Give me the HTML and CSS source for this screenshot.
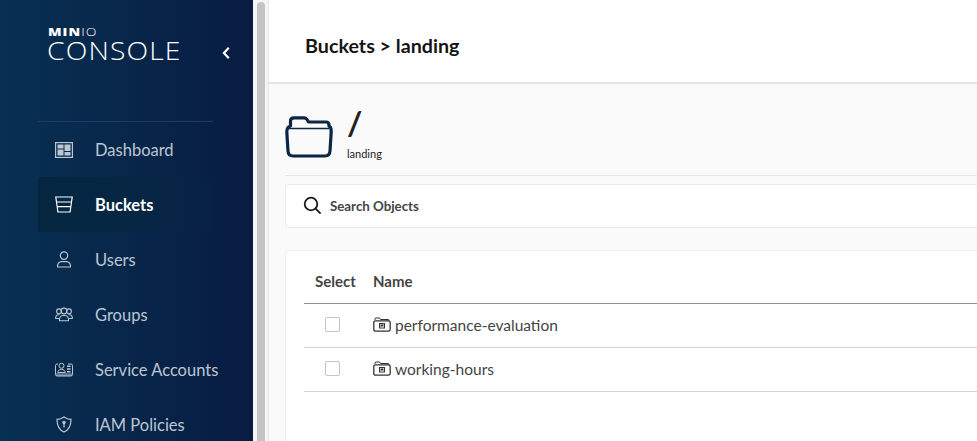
FILE: index.html
```html
<!DOCTYPE html>
<html lang="en">
<head>
<meta charset="utf-8">
<title>MinIO Console</title>
<link rel="stylesheet" href="styles.css">
</head>
<body>
<div class="app">
  <aside class="sidebar">
    <div class="brand">
      <div class="logo">
        <div class="logo-minio"><b>MIN</b><span>IO</span></div>
        <div class="logo-console">CONSOLE</div>
      </div>
      <svg class="collapse" width="10" height="14" viewBox="0 0 10 14"><path d="M7.800 1.800 2.900 7l4.900 5.200" fill="none" stroke="#fff" stroke-width="2.200"/></svg>
    </div>
    <nav class="nav">
      <a class="nav-item">
        <svg class="nav-icon" width="18" height="16" viewBox="0 0 18 16"><rect x=".6" y=".6" width="16.800" height="14.800" fill="none" stroke="currentColor" stroke-width="1.200"/><path d="M2.500 2.500h6v4h-6zM2.500 7.500h6v6h-6zM9.500 2.500h6v6.500h-6zM9.500 10h6v3.500h-6z" fill="currentColor"/></svg>
        <span>Dashboard</span>
      </a>
      <a class="nav-item active">
        <svg class="nav-icon" width="18" height="17" viewBox="0 0 18 17"><path d="M.8 1h16.400l-.7 5H1.500zM1.500 6l1.400 10h12.200l1.400-10M2.300 10.700h13.400" fill="none" stroke="currentColor" stroke-width="1.200"/></svg>
        <span>Buckets</span>
      </a>
      <a class="nav-item">
        <svg class="nav-icon" width="18" height="17" viewBox="0 0 18 17"><circle cx="9" cy="4.600" r="3.700" fill="none" stroke="currentColor" stroke-width="1.200"/><path d="M2.600 16c-.6-3 1.500-5.300 4-5.300h4.800c2.500 0 4.600 2.300 4 5.300z" fill="none" stroke="currentColor" stroke-width="1.200"/></svg>
        <span>Users</span>
      </a>
      <a class="nav-item">
        <svg class="nav-icon" width="18" height="15" viewBox="0 0 18 15"><g fill="none" stroke="currentColor" stroke-width="1.100"><circle cx="9" cy="4" r="2.900"/><circle cx="4" cy="4.300" r="2.400"/><circle cx="14" cy="4.300" r="2.400"/><path d="M4.500 13.800c-.5-3 1.200-5.300 3.500-5.300h2c2.300 0 4 2.300 3.500 5.300z"/><path d="M4.500 7.500C2 7.500.3 9 .7 11.500H4.500M13.500 7.500c2.500 0 4.200 1.500 3.800 4H13.500"/></g></svg>
        <span>Groups</span>
      </a>
      <a class="nav-item">
        <svg class="nav-icon" width="18" height="15" viewBox="0 0 18 15"><g fill="none" stroke="currentColor"><path d="M3 2H2a1.500 1.500 0 0 0-1.500 1.500v9A1.500 1.500 0 0 0 2 14h14a1.500 1.500 0 0 0 1.500-1.500v-9A1.500 1.500 0 0 0 16 2h-3"/><circle cx="6.500" cy="3.800" r="2.500"/><path d="M2.800 10.500c0-2 1.500-3 3.700-3s3.700 1 3.700 3z"/></g><path d="M12 3.500h3.500v1.500H12zM12 6.300h3.500v1.500H12zM12 9h3.500v1.500H12z" fill="currentColor"/><path d="M1 11.200h16V14H1z" fill="currentColor" opacity=".5"/></svg>
        <span>Service Accounts</span>
      </a>
      <a class="nav-item">
        <svg class="nav-icon" width="18" height="17" viewBox="0 0 18 17"><path d="M9 1c2 1.500 4.500 2.300 7 2.300 0 5-1 10.200-7 12.700C3 13.500 2 8.300 2 3.300 4.500 3.300 7 2.500 9 1z" fill="none" stroke="currentColor" stroke-width="1.200"/><circle cx="9" cy="6.500" r="1.700" fill="currentColor"/><path d="M9 7v4.500" stroke="currentColor" stroke-width="1.300"/></svg>
        <span>IAM Policies</span>
      </a>
    </nav>
  </aside>
  <div class="scrollbar"><div class="thumb"></div></div>
  <main class="main">
    <header class="page-header"><h1>Buckets &gt; landing</h1></header>
    <section class="content">
      <div class="object-head">
        <svg class="big-folder" width="48" height="42" viewBox="0 0 48 42"><path d="M1.800 16 3 35q.3 5 5 5h32q4.700 0 5-5l1.200-19q.2-5-2.200-6V9q0-3-3-3H23.500L22 3.500Q21 1.800 19 1.800H9Q5.500 1.800 5.500 5v5Q1.800 11 1.800 16z" fill="none" stroke="#0b2545" stroke-width="3.200" stroke-linejoin="round"/><path d="M4 12.500h40" fill="none" stroke="#0b2545" stroke-width="1.500"/></svg>
        <div class="object-title">
          <div class="slash">/</div>
          <div class="bucket-name">landing</div>
        </div>
      </div>
      <div class="search">
        <svg width="19" height="19" viewBox="0 0 19 19"><circle cx="8" cy="8" r="6.300" fill="none" stroke="#1a1a1a" stroke-width="1.800"/><path d="m12.600 12.600 5 5" stroke="#1a1a1a" stroke-width="1.800"/></svg>
        <span>Search Objects</span>
      </div>
      <div class="table-card">
        <div class="row head">
          <div class="col-select">Select</div>
          <div class="col-name">Name</div>
        </div>
        <div class="row">
          <div class="col-select"><span class="check"></span></div>
          <div class="col-name">
            <svg class="row-icon" width="18" height="15" viewBox="0 0 18 15"><g fill="none" stroke="#333"><path d="M2 3V2q0-1 1-1h3.500l1 1.500H15q1 0 1 1V4" stroke-width="1"/><rect x=".8" y="3.800" width="16.400" height="10.400" rx="1.800" stroke-width="1.300"/><rect x="6.500" y="6.500" width="5" height="4.500"/></g><rect x="7.500" y="7.500" width="3" height="2" fill="#333"/></svg>
            <span>performance-evaluation</span>
          </div>
        </div>
        <div class="row">
          <div class="col-select"><span class="check"></span></div>
          <div class="col-name">
            <svg class="row-icon" width="18" height="15" viewBox="0 0 18 15"><g fill="none" stroke="#333"><path d="M2 3V2q0-1 1-1h3.500l1 1.500H15q1 0 1 1V4" stroke-width="1"/><rect x=".8" y="3.800" width="16.400" height="10.400" rx="1.800" stroke-width="1.300"/><rect x="6.500" y="6.500" width="5" height="4.500"/></g><rect x="7.500" y="7.500" width="3" height="2" fill="#333"/></svg>
            <span>working-hours</span>
          </div>
        </div>
      </div>
    </section>
  </main>
</div>
</body>
</html>
```
FILE: styles.css
```css
* { box-sizing: border-box; }
html, body { margin: 0; height: 100%; overflow: hidden; }
body { font-family: Lato, "Liberation Sans", sans-serif; background: #fff; color: #3a3a3a; }
.app { display: flex; width: 977px; height: 441px; overflow: hidden; }

.sidebar { flex: 0 0 253px; min-width: 0; height: 441px; background: linear-gradient(90deg, #073052 0%, #081c42 100%); color: #fff; }
.brand { display: flex; align-items: flex-start; height: 121px; padding: 28px 0 0 48px; }
.logo { width: 173px; flex: none; }
.logo-minio { font-family: "Open Sans", sans-serif; font-size: 10px; line-height: 8px; height: 8px; letter-spacing: .75px; transform: scaleX(1.4); transform-origin: left top; white-space: nowrap; }
.logo-minio b { font-weight: 800; }
.logo-minio span { font-weight: 300; }
.logo-console { font-family: "Open Sans", sans-serif; font-weight: 300; font-size: 25px; line-height: 22px; height: 22px; letter-spacing: 1px; margin-top: 3px; margin-left: -1px; transform: scaleX(1.13); transform-origin: left center; white-space: nowrap; }
.collapse { margin-top: 18px; flex: none; }

.nav { margin-left: 38px; width: 175px; border-top: 1px solid #1c3a63; }
.nav-item { display: flex; align-items: center; height: 55px; padding-left: 17px; font-size: 16.500px; color: #bcc7d3; white-space: nowrap; }
.nav-icon { flex: none; margin-right: 22px; width: 18px; }
.nav-item.active { color: #fff; font-weight: 700; background: linear-gradient(90deg, #05263f 0%, rgba(6,36,68,.15) 100%); }

.scrollbar { flex: 0 0 15px; background: #f5f5f5; padding: 2px 3px 0 4px; border-right: 1px solid #e6e6e6; }
.thumb { width: 8px; height: 100%; background: #c4c4c4; border-radius: 4px 4px 0 0; }

.main { flex: 1; min-width: 0; height: 441px; display: flex; flex-direction: column; }
.page-header { flex: none; height: 84px; padding: 34px 0 0 37px; background: #fff; border-bottom: 2px solid #e5e5e5; }
.page-header h1 { margin: 0 0 0 -1px; font-size: 19.700px; line-height: 24px; font-weight: 700; color: #141414; }

.content { flex: 1; min-height: 0; background: #fafafa; padding: 0 0 0 16px; }
.object-head { display: flex; height: 92px; border-bottom: 1px solid #e5e5e5; }
.big-folder { margin-top: 32px; margin-left: 0; flex: none; }
.object-title { margin-left: 14px; }
.slash { font-size: 33px; font-weight: 700; line-height: 40px; margin-top: 18px; height: 45px; color: #222; }
.bucket-name { font-size: 11px; line-height: 14px; color: #222; }
.search { display: flex; align-items: center; height: 44px; margin-top: 8px; padding: 0 0 1px 17px; background: #fff; border: 1px solid #eaeaea; border-right: 0; border-radius: 4px 0 0 4px; font-size: 13.300px; font-weight: 700; color: #444; }
.search span { margin-left: 8px; }

.table-card { margin-top: 22px; height: 200px; padding: 9px 0 0 18px; background: #fff; border: 1px solid #eeeeee; border-right: 0; border-radius: 4px 0 0 0; }
.row { display: flex; align-items: center; height: 44px; padding-bottom: 2px; border-bottom: 1px solid #d4d4d4; font-size: 15.500px; color: #444; }
.row.head { font-weight: 700; border-bottom-color: #8f8f8f; font-size: 15px; }
.col-select { width: 69px; padding-left: 11px; flex: none; }
.col-name { display: flex; align-items: center; }
.row-icon { margin-right: 4px; flex: none; }
.check { display: block; width: 15px; height: 15px; margin-left: 10px; background: #fff; border: 1px solid #c4c4c4; border-radius: 2px; }
```
